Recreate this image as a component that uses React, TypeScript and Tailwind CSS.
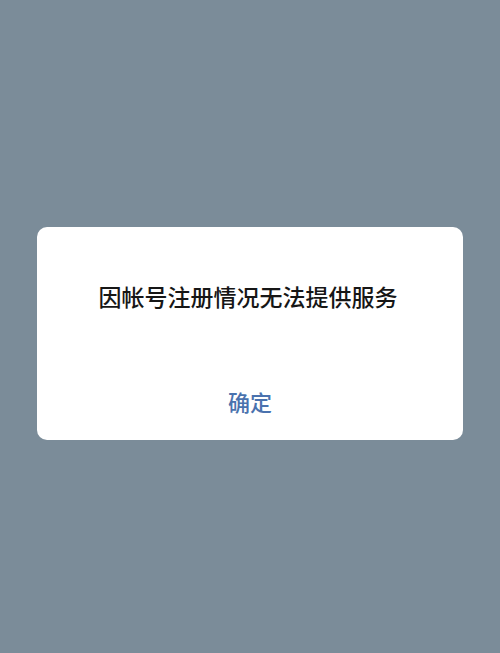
export default function App() {
  return (
    <div
      className="min-h-[653px] w-full bg-[#7b8c99] px-[37px] pt-[227px]"
      style={{ fontFamily: '"Noto Sans CJK SC", "Noto Sans", sans-serif' }}
    >
      <div className="flex h-[213px] flex-col items-center rounded-[10px] bg-white pt-[54px]">
        <p className="pr-[4px] text-[23px] font-medium leading-[30px] text-[#161616]">因帐号注册情况无法提供服务</p>
        <button className="mt-[76px] text-[22px] font-medium leading-[28px] text-[#4a72ae]">确定</button>
      </div>
    </div>
  );
}
